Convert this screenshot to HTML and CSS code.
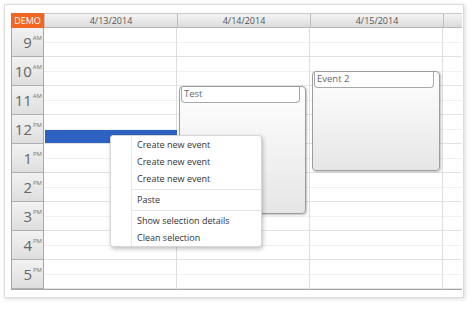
FILE: index.html
```html
<!DOCTYPE html>
<html lang="en">
<head>
  <meta charset="UTF-8" />
  <title>Calendar</title>
  <link rel="stylesheet" href="styles.css">
</head>
<body>
  <div class="panel">
    <div class="calendar">
      <div class="head">
        <div class="corner">DEMO</div>
        <div class="day-head">4/13/2014</div>
        <div class="day-head">4/14/2014</div>
        <div class="day-head">4/15/2014</div>
        <div class="day-head filler"></div>
      </div>

      <div class="body">
        <div class="hours">
          <div class="hour">9<sup>AM</sup></div>
          <div class="hour">10<sup>AM</sup></div>
          <div class="hour">11<sup>AM</sup></div>
          <div class="hour">12<sup>PM</sup></div>
          <div class="hour">1<sup>PM</sup></div>
          <div class="hour">2<sup>PM</sup></div>
          <div class="hour">3<sup>PM</sup></div>
          <div class="hour">4<sup>PM</sup></div>
          <div class="hour">5<sup>PM</sup></div>
        </div>
        <div class="day"></div>
        <div class="day"></div>
        <div class="day"></div>
        <div class="day filler"></div>
      </div>

      <div class="selection"></div>

      <div class="event event-test">
        <div class="event-bar">Test</div>
      </div>
      <div class="event event-two">
        <div class="event-bar">Event 2</div>
      </div>

      <div class="menu">
        <div class="menu-item">Create new event</div>
        <div class="menu-item">Create new event</div>
        <div class="menu-item">Create new event</div>
        <div class="menu-sep"></div>
        <div class="menu-item">Paste</div>
        <div class="menu-sep"></div>
        <div class="menu-item">Show selection details</div>
        <div class="menu-item">Clean selection</div>
      </div>
    </div>
  </div>
</body>
</html>
```

FILE: styles.css
```css
body {
  margin: 0;
  background: #fff;
  font-family: 'Open Sans', 'DejaVu Sans', sans-serif;
  color: #555;
}
.panel {
  margin: 4px;
  width: 460px;
  height: 294px;
  border: 1px solid #dcdcdc;
  box-shadow: 1px 1px 4px rgba(0,0,0,0.15);
  padding: 8px 0 0 6px;
  box-sizing: border-box;
}
.calendar {
  position: relative;
  width: 451px;
}
.head {
  display: grid;
  grid-template-columns: 33px 133px 133px 133px 19px;
  height: 15px;
}
.corner {
  background: #f26522;
  color: #fff;
  font-size: 9px;
  line-height: 15px;
  text-align: center;
}
.day-head {
  background: linear-gradient(#f4f4f4, #dcdcdc);
  border-top: 1px solid #c8c8c8;
  border-bottom: 1px solid #b8b8b8;
  border-left: 1px solid #c0c0c0;
  box-sizing: border-box;
  font-size: 9px;
  line-height: 13px;
  text-align: center;
  color: #555;
}
.body {
  display: grid;
  grid-template-columns: 33px 133px 133px 133px 19px;
  height: 261px;
  border-bottom: 1px solid #a8a8a8;
}
.hours {
  border-left: 1px solid #a8a8a8;
  border-right: 1px solid #a8a8a8;
}
.hour {
  height: 29px;
  box-sizing: border-box;
  border-bottom: 1px solid #b0b0b0;
  background: linear-gradient(#f2f2f2, #dedede);
  text-align: right;
  padding-right: 1px;
  font-size: 15px;
  line-height: 20px;
  color: #666;
}
.hour sup {
  font-size: 6px;
  vertical-align: 8px;
  margin-left: 1px;
  color: #777;
}
.day {
  border-right: 1px solid #dddddd;
  background:
    repeating-linear-gradient(to bottom,
      transparent 0, transparent 14px,
      #f0f0f0 14px, #f0f0f0 15px,
      transparent 15px, transparent 28px,
      #e2e2e2 28px, #e2e2e2 29px);
}
.day.filler {
  border-right: none;
}
.selection {
  position: absolute;
  left: 34px;
  top: 117px;
  width: 132px;
  height: 13px;
  background: #2e62c2;
}
.event {
  position: absolute;
  box-sizing: border-box;
  border: 1px solid #9c9c9c;
  border-radius: 4px;
  background: linear-gradient(#ffffff, #e6e6e6);
  box-shadow: 1px 1px 2px rgba(0,0,0,0.25);
}
.event-test {
  left: 168px;
  top: 73px;
  width: 127px;
  height: 128px;
}
.event-two {
  left: 301px;
  top: 58px;
  width: 128px;
  height: 100px;
}
.event-bar {
  margin: 0 5px 0 1px;
  height: 15px;
  border: 1px solid #a8a8a8;
  border-top: none;
  border-radius: 0 0 4px 4px;
  background: #fff;
  font-size: 9.5px;
  line-height: 14px;
  padding-left: 2px;
  color: #666;
}
.menu {
  position: absolute;
  left: 99px;
  top: 122px;
  width: 152px;
  height: 112px;
  box-sizing: border-box;
  background: #fff;
  border: 1px solid #d6d6d6;
  border-radius: 3px;
  box-shadow: 1px 2px 4px rgba(0,0,0,0.25);
  background-image: linear-gradient(to right, transparent 20px, #e8e8e8 20px, #e8e8e8 21px, transparent 21px);
}
.menu-item {
  height: 17px;
  line-height: 17px;
  padding-left: 26px;
  font-size: 9px;
  color: #333;
}
.menu-sep {
  margin: 2px 0 1px 21px;
  border-top: 1px solid #e4e4e4;
}
```
